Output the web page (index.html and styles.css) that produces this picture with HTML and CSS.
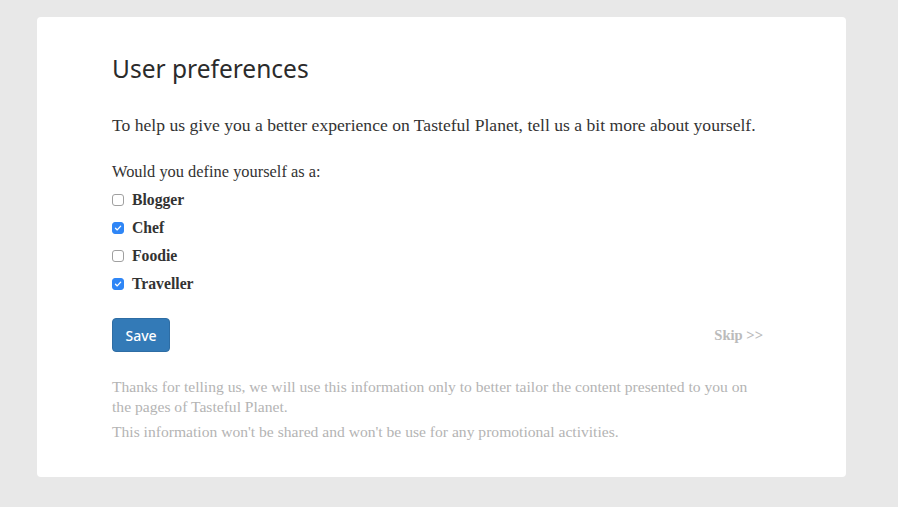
FILE: index.html
```html
<!DOCTYPE html>
<html>
<head>
<meta charset="utf-8">
<link rel="stylesheet" href="styles.css">
</head>
<body>
<div class="card">
  <h1 class="title">User preferences</h1>
  <p class="intro">To help us give you a better experience on Tasteful Planet, tell us a bit more about yourself.</p>
  <p class="question">Would you define yourself as a:</p>
  <ul class="options">
    <li class="option"><span class="box"></span><span class="label">Blogger</span></li>
    <li class="option"><span class="box checked"><svg viewBox="0 0 12 12" width="12" height="12"><path d="M3 6.2 L5.1 8.3 L9.2 3.8" fill="none" stroke="#fff" stroke-width="1.6" stroke-linecap="round" stroke-linejoin="round"/></svg></span><span class="label">Chef</span></li>
    <li class="option"><span class="box"></span><span class="label">Foodie</span></li>
    <li class="option"><span class="box checked"><svg viewBox="0 0 12 12" width="12" height="12"><path d="M3 6.2 L5.1 8.3 L9.2 3.8" fill="none" stroke="#fff" stroke-width="1.6" stroke-linecap="round" stroke-linejoin="round"/></svg></span><span class="label">Traveller</span></li>
  </ul>
  <div class="actions">
    <button class="save">Save</button>
    <a class="skip">Skip &gt;&gt;</a>
  </div>
  <p class="note">Thanks for telling us, we will use this information only to better tailor the content presented to you on the pages of Tasteful Planet.</p>
  <p class="note second">This information won't be shared and won't be use for any promotional activities.</p>
</div>
</body>
</html>
```
FILE: styles.css
```css
html, body {
  margin: 0;
  padding: 0;
}
body {
  background: #e8e8e8;
  padding: 17px 52px 30px 37px;
  font-family: "Liberation Serif", serif;
  color: #333;
}
.card {
  background: #fff;
  border-radius: 4px;
  padding: 37px 83px 31px 75px;
  height: 460px;
  box-sizing: border-box;
}
.title {
  font-family: "Noto Sans", sans-serif;
  font-weight: 400;
  font-size: 24.5px;
  line-height: 30px;
  margin: 0 0 31px 0;
  color: #2b2b2b;
}
.intro {
  font-size: 17.6px;
  line-height: 20px;
  margin: 0 0 27px 0;
}
.question {
  font-size: 16.4px;
  line-height: 20px;
  margin: 0 0 4px 0;
}
.options {
  list-style: none;
  margin: 0;
  padding: 0;
}
.option {
  display: flex;
  align-items: center;
  height: 28px;
  gap: 8px;
}
.box {
  width: 12px;
  height: 12px;
  box-sizing: border-box;
  border: 1px solid #a0a0a0;
  border-radius: 3px;
  display: flex;
  align-items: center;
  justify-content: center;
  background: #fff;
}
.box.checked {
  background: #2f86f6;
  border-color: #2f86f6;
}
.box svg {
  display: block;
}
.label {
  font-weight: 700;
  font-size: 15.7px;
}
.actions {
  display: flex;
  justify-content: space-between;
  align-items: center;
  margin-top: 20px;
}
.save {
  font-family: "Noto Sans", sans-serif;
  font-weight: 500;
  font-size: 14px;
  color: #fff;
  background: #337ab7;
  border: 1px solid #2e6da4;
  border-radius: 4px;
  width: 58px;
  height: 34px;
  padding: 0;
}
.skip {
  font-weight: 700;
  font-size: 14.6px;
  color: #bbb;
}
.note {
  color: #b4b4b4;
  font-size: 15.6px;
  line-height: 20px;
  margin: 25px 0 0 0;
}
.note.second {
  margin-top: 5px;
}
```
